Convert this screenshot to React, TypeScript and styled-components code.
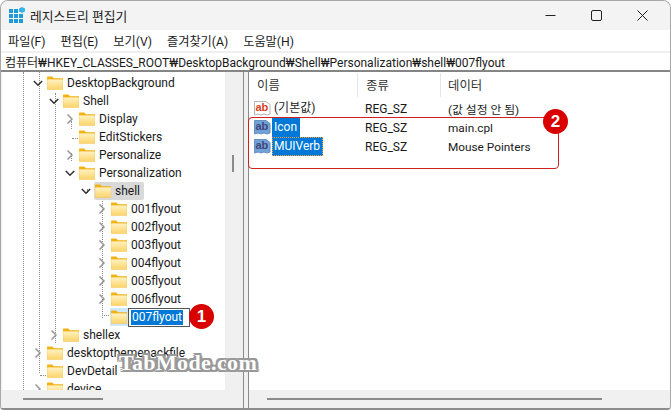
import React from "react";
import styled, { createGlobalStyle } from "styled-components";

const Global = createGlobalStyle`
  html, body { margin: 0; padding: 0; background: #fff; }
  body { width: 671px; height: 410px; overflow: hidden; font-family: Roboto, "Noto Sans CJK KR", sans-serif; font-size: 12px; color: #1a1a1a; }
  * { box-sizing: border-box; }
`;

const Window = styled.div`
  position: relative; width: 671px; height: 410px; display: flex; flex-direction: column;
  border: 1px solid #a8a8a8; border-bottom: 2px solid #8c8c8c; border-radius: 8px 8px 4px 4px; overflow: hidden; background: #fff;
`;
const TitleBar = styled.div`
  height: 29px; flex: none; display: flex; align-items: center; background: #f3f3f3; padding-left: 8px;
`;
const TitleText = styled.span`
  margin-left: 4px; font-size: 12.8px; color: #222;
`;
const Controls = styled.div`
  margin-left: auto; display: flex; align-items: center; padding-right: 5px;
`;
const ControlButton = styled.span`
  width: 46px; height: 29px; display: flex; align-items: center; justify-content: center;
`;
const MenuBar = styled.div`
  height: 21px; flex: none; display: flex; align-items: center; gap: 15px; padding-left: 7px; background: #fff; font-size: 12.2px;
`;
const MenuItem = styled.span`
  color: #1a1a1a;
`;
const AddressBar = styled.div`
  height: 21px; flex: none; display: flex; align-items: center; padding: 0 4px; background: #fff;
  border-top: 2px solid #f0f0f0; border-bottom: 2px solid #858585; font-size: 12px; white-space: nowrap;
`;
const Panes = styled.div`
  flex: 1; min-height: 0; display: flex;
`;
const TreePane = styled.div`
  position: relative; width: 243px; flex: none; display: grid; grid-template-columns: 1fr 18px; grid-template-rows: 1fr 18px;
  border-right: 1px solid #8a8a8a; background: #f0f0f0; overflow: hidden;
`;
const Splitter = styled.div`
  width: 4px; flex: none; background: #f0f0f0;
`;
const Tree = styled.div`
  position: relative; background: #fff; overflow: hidden; padding-top: 2px; border-left: 1px solid #f0f0f0;
`;
const Guide = styled.span<{ $x: number; $y: number; $h?: number; $w?: number }>`
  position: absolute; left: ${p => p.$x}px; top: ${p => p.$y}px;
  width: ${p => p.$w ?? 1}px; height: ${p => p.$h ?? 1}px;
  border-left: ${p => (p.$w ? 0 : 1)}px dotted #8a8a8a; border-top: ${p => (p.$w ? 1 : 0)}px dotted #8a8a8a;
`;
const Row = styled.div<{ $depth: number }>`
  position: relative; height: 18px; display: flex; align-items: center; padding-left: ${p => 30 + p.$depth * 16}px; white-space: nowrap;
`;
const Chevron = styled.span`
  width: 12px; height: 18px; flex: none; display: flex; align-items: center; justify-content: center;
`;
const FolderWrap = styled.span<{ $tone?: string }>`
  width: 18px; height: 18px; flex: none; display: flex; align-items: center; justify-content: center;
  background: ${p => p.$tone ?? "transparent"};
`;
const Entry = styled.span<{ $current?: boolean }>`
  display: flex; align-items: center; height: 18px; margin-left: 2px; padding-right: 4px;
  background: ${p => (p.$current ? "#d9d9d9" : "transparent")}; border-radius: 2px;
`;
const Label = styled.span`
  margin-left: 3px; color: #1a1a1a;
`;
const EditBox = styled.span`
  height: 19px; width: 62px; display: flex; align-items: center; padding-left: 2px;
  border: 1px solid #555; background: #fff;
`;
const EditSelection = styled.span`
  background: #0078d7; color: #fff; height: 15px; line-height: 14px; padding: 0 1px;
`;
const VTrack = styled.div`
  position: relative; background: #f0f0f0;
`;
const VThumb = styled.span`
  position: absolute; left: 7px; top: 83px; width: 2px; height: 17px; background: #8a8a8a;
`;
const HTrack = styled.div<{ $left: number; $width: number }>`
  background: #f0f0f0; display: flex; align-items: center; padding-left: ${p => p.$left}px;
  &::before { content: ""; display: block; width: ${p => p.$width}px; height: 2px; background: #8a8a8a; }
`;
const ListTrack = styled(HTrack)`
  height: 18px; flex: none;
`;
const Corner = styled.div`
  background: #f0f0f0;
`;
const ListPane = styled.div`
  position: relative; flex: 1; min-width: 0; display: flex; flex-direction: column; border-left: 1px solid #8a8a8a;
`;
const ListBody = styled.div`
  flex: 1; min-height: 0; background: #fff;
`;
const Header = styled.div`
  height: 27px; display: grid; grid-template-columns: 109px 83px 1fr; align-items: stretch; padding: 1px 0 2px; color: #333; font-size: 12.4px;
`;
const HeadCell = styled.span`
  display: flex; align-items: center; padding-left: 8px; border-right: 1px solid #e5e5e5;
  &:last-child { border-right: 0; padding-left: 7px; }
`;
const ListRow = styled.div`
  height: 19px; display: grid; grid-template-columns: 109px 83px 1fr; align-items: center;
`;
const NameCell = styled.span`
  display: flex; align-items: center; padding-left: 5px; height: 19px;
`;
const ValueName = styled.span<{ $selected?: boolean; $focus?: boolean }>`
  height: 19px; line-height: 18px; margin-left: 1px; padding: 0 3px 0 2px;
  background: ${p => (p.$selected ? "#0078d7" : "transparent")};
  color: ${p => (p.$selected ? "#fff" : "#1a1a1a")};
  outline: ${p => (p.$focus ? "1px dotted #f0a030" : "none")}; outline-offset: -1px;
`;
const Cell = styled.span`
  padding-left: 7px; color: #1a1a1a; white-space: nowrap;
`;
const NarrowCell = styled(Cell)`
  font-size: 11.8px;
`;
const RedFrame = styled.div`
  position: absolute; left: -1px; top: 45px; width: 311px; height: 52px; border: 1px solid #cf1f1f; border-radius: 4px; pointer-events: none;
`;
const Badge = styled.span<{ $x: number; $y: number }>`
  position: absolute; left: ${p => p.$x}px; top: ${p => p.$y}px; width: 25px; height: 25px; border-radius: 50%;
  background: #d90000; color: #fff; font: bold 17px/25px "Liberation Sans", sans-serif; text-align: center;
`;
const Watermark = styled.span`
  position: absolute; left: 118px; top: 350px; font: bold 22px/24px "Liberation Serif", serif; color: #fff; letter-spacing: .35px; white-space: nowrap;
  -webkit-text-stroke: .7px #fff; paint-order: stroke fill;
  text-shadow: 2px 0 0 #999, -2px 0 0 #999, 0 2px 0 #999, 0 -2px 0 #999, 2px 2px 0 #999, -2px -2px 0 #999, 2px -2px 0 #999, -2px 2px 0 #999, 3px 1px 1px #aaa;
`;

const AppIcon = () => (
  <svg width="17" height="17" viewBox="0 0 17 17">
    <g fill="#1e9bd7">
      {[1, 6, 11].flatMap(y => [0, 5, 10].map(x => (x === 10 && y === 1 ? null : <rect key={`${x}-${y}`} x={x} y={y + 1} width="4" height="4" />)))}
    </g>
    <path d="M13 0l3 1.5v3L13 6l-3-1.5v-3z" fill="#37b5e8" />
  </svg>
);
const Folder = () => (
  <svg width="16" height="14" viewBox="0 0 17 14">
    <defs>
      <linearGradient id="fg" x1="0" y1="0" x2="0" y2="1">
        <stop offset="0" stopColor="#fff3c4" />
        <stop offset="1" stopColor="#fcd367" />
      </linearGradient>
    </defs>
    <path d="M0 1.2C0 .5.5 0 1.2 0h4.3l2 2H17v3H0z" fill="#f3b10f" />
    <path d="M0 3h16.2c.4 0 .8.4.8.8v9.2c0 .6-.4 1-1 1H1c-.6 0-1-.4-1-1z" fill="url(#fg)" stroke="#f2c14a" strokeWidth=".5" />
  </svg>
);
const Chev = ({ open }: { open?: boolean }) => (
  <svg width="10" height="10" viewBox="0 0 10 10" fill="none" stroke={open ? "#333" : "#999"} strokeWidth="1.5">
    {open ? <path d="M.8 3l4.2 4.2L9.2 3" /> : <path d="M2.5.5L7 5 2.5 9.5" />}
  </svg>
);
const AbIcon = ({ blue }: { blue?: boolean }) => (
  <svg width="17" height="17" viewBox="0 0 17 17">
    <path d="M.5 1.5h11.5l4 3v9.5l-3 1-3-1-3 1-3-1-3.500 1z" fill={blue ? "#6fa3d8" : "#fff"} stroke={blue ? "#6a8fc0" : "#b5b5b5"} />
    <text x="1.500" y="11" fontFamily="Liberation Sans" fontWeight="bold" fontSize="11" fill={blue ? "#45457a" : "#d8401c"}>ab</text>
  </svg>
);

type Item = { name: string; depth: number; chev?: "open" | "closed" };
const items: Item[] = [
  { name: "DesktopBackground", depth: 0, chev: "open" },
  { name: "Shell", depth: 1, chev: "open" },
  { name: "Display", depth: 2, chev: "closed" },
  { name: "EditStickers", depth: 2 },
  { name: "Personalize", depth: 2, chev: "closed" },
  { name: "Personalization", depth: 2, chev: "open" },
  { name: "shell", depth: 3, chev: "open" },
  { name: "001flyout", depth: 4, chev: "closed" },
  { name: "002flyout", depth: 4, chev: "closed" },
  { name: "003flyout", depth: 4, chev: "closed" },
  { name: "004flyout", depth: 4, chev: "closed" },
  { name: "005flyout", depth: 4, chev: "closed" },
  { name: "006flyout", depth: 4, chev: "closed" },
  { name: "007flyout", depth: 4 },
  { name: "shellex", depth: 1, chev: "closed" },
  { name: "desktopthemepackfile", depth: 0, chev: "closed" },
  { name: "DevDetail", depth: 0 },
  { name: "device", depth: 0, chev: "closed" },
];

const guides = [
  { x: 21, y: 0, h: 340 },
  { x: 37, y: 0, h: 301 },
  { x: 53, y: 21, h: 250 },
  { x: 69, y: 49, h: 8 },
  { x: 69, y: 81, h: 8 },
  { x: 85, y: 117, h: 4 },
  { x: 100, y: 126, h: 120 },
];

const menus = ["파일(F)", "편집(E)", "보기(V)", "즐겨찾기(A)", "도움말(H)"];

export default function App() {
  return (
    <>
      <Global />
      <Window>
        <TitleBar>
          <AppIcon />
          <TitleText>레지스트리 편집기</TitleText>
          <Controls>
            <ControlButton>
              <svg width="11" height="11" viewBox="0 0 11 11"><path d="M.5 5.5h10" stroke="#222" /></svg>
            </ControlButton>
            <ControlButton>
              <svg width="11" height="11" viewBox="0 0 11 11"><rect x=".5" y=".5" width="10" height="10" rx="1.5" fill="none" stroke="#222" /></svg>
            </ControlButton>
            <ControlButton>
              <svg width="11" height="11" viewBox="0 0 11 11"><path d="M.5.5l10 10M10.5.5l-10 10" stroke="#222" /></svg>
            </ControlButton>
          </Controls>
        </TitleBar>
        <MenuBar>
          {menus.map(m => <MenuItem key={m}>{m}</MenuItem>)}
        </MenuBar>
        <AddressBar>컴퓨터₩HKEY_CLASSES_ROOT₩DesktopBackground₩Shell₩Personalization₩shell₩007flyout</AddressBar>
        <Panes>
          <TreePane>
            <Tree>
              {guides.map((g, i) => <Guide key={i} $x={g.x} $y={g.y} $h={g.h} />)}
              <Guide $x={70} $y={66} $w={6} />
              <Guide $x={100} $y={243} $w={7} />
              <Guide $x={38} $y={303} $w={6} />
              {items.map(it => {
                const isEdit = it.name === "007flyout";
                return (
                  <Row key={it.name} $depth={it.depth}>
                    <Chevron>{it.chev && <Chev open={it.chev === "open"} />}</Chevron>
                    <Entry $current={it.name === "shell"}>
                      <FolderWrap $tone={isEdit ? "#cde8ff" : undefined}><Folder /></FolderWrap>
                      {isEdit ? (
                        <EditBox><EditSelection>{it.name}</EditSelection></EditBox>
                      ) : (
                        <Label>{it.name}</Label>
                      )}
                    </Entry>
                  </Row>
                );
              })}
            </Tree>
            <VTrack><VThumb /></VTrack>
            <HTrack $left={22} $width={80} />
            <Corner />
          </TreePane>
          <Splitter />
          <ListPane>
            <ListBody>
              <Header>
                <HeadCell>이름</HeadCell>
                <HeadCell>종류</HeadCell>
                <HeadCell>데이터</HeadCell>
              </Header>
              <ListRow>
                <NameCell><AbIcon /><ValueName>(기본값)</ValueName></NameCell>
                <Cell>REG_SZ</Cell>
                <NarrowCell>(값 설정 안 됨)</NarrowCell>
              </ListRow>
              <ListRow>
                <NameCell><AbIcon blue /><ValueName $selected>Icon</ValueName></NameCell>
                <Cell>REG_SZ</Cell>
                <NarrowCell>main.cpl</NarrowCell>
              </ListRow>
              <ListRow>
                <NameCell><AbIcon blue /><ValueName $selected $focus>MUIVerb</ValueName></NameCell>
                <Cell>REG_SZ</Cell>
                <NarrowCell>Mouse Pointers</NarrowCell>
              </ListRow>
            </ListBody>
            <ListTrack $left={18} $width={335} />
            <RedFrame />
          </ListPane>
        </Panes>
        <Badge $x={188} $y={303}>1</Badge>
        <Badge $x={542} $y={108}>2</Badge>
        <Watermark>TabMode.com</Watermark>
      </Window>
    </>
  );
}
